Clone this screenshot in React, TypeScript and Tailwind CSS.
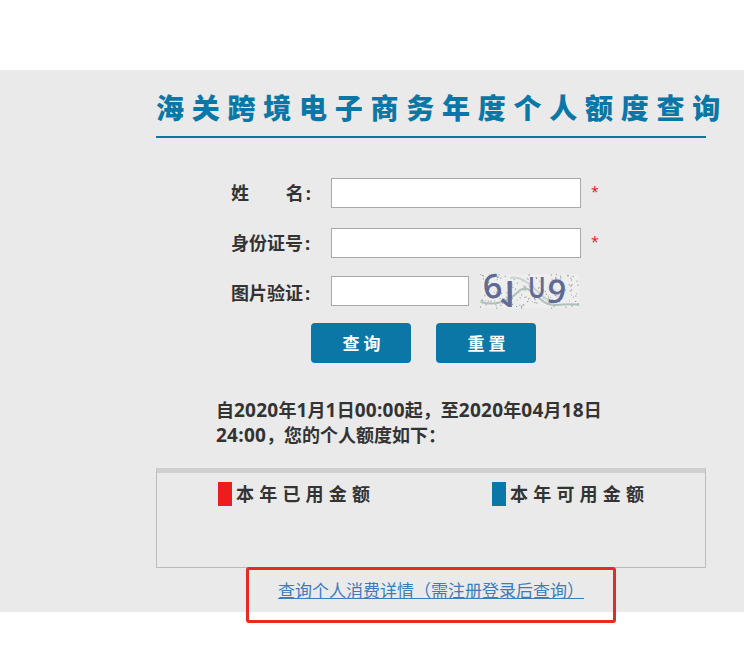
const FONT = "font-['Open_Sans','Noto_Sans_CJK_SC',sans-serif]"

// scattered noise for the captcha, same every render
const DOTS = Array.from({ length: 170 }, (_, i) => {
  const a = Math.sin(i * 12.9898) * 43758.5453
  const b = Math.sin(i * 78.233) * 12543.1234
  return {
    x: (a - Math.floor(a)) * 98,
    y: 2 + (b - Math.floor(b)) * 34,
    c: i % 4 === 0 ? "#7fa58c" : "#555555",
  }
})

function Captcha() {
  return (
    <svg width="100" height="54" viewBox="0 -8 100 54" className="ml-[11px] shrink-0 overflow-visible">
      <rect x="1" y="2" width="98" height="34" fill="#eeeeee" />
      {DOTS.map((d, i) => (
        <rect key={i} x={d.x} y={d.y} width="1" height="1" fill={d.c} opacity="0.7" />
      ))}
      <path d="M1 30 C14 34 28 30 38 20 C48 10 54 24 66 31 C76 36 88 30 99 33" fill="none" stroke="#b0c0ba" strokeWidth="2" />
      <path d="M30 6 C46 2 58 24 74 32" fill="none" stroke="#c9d4d0" strokeWidth="2" />
      <g fill="#5f6b96" fontFamily="'Open Sans',sans-serif" fontWeight="600">
        <text x="3" y="26" fontSize="33" transform="rotate(-10 14 15)">6</text>
        <text transform="translate(18 9) scale(1 -1)" fontSize="36">1</text>
        <text transform="translate(48 26) scale(0.82 1)" fontSize="29">U</text>
        <text x="67" y="31" fontSize="33" transform="rotate(8 76 20)">9</text>
      </g>
    </svg>
  )
}

function Field({ label, width, children }: { label: React.ReactNode; width: string; children?: React.ReactNode }) {
  return (
    <div className="flex h-[30px] items-center pl-[75px]">
      <label className="w-[100px] shrink-0 text-[18px] font-bold leading-[30px] text-[#333]">{label}</label>
      <input type="text" className={`h-[30px] ${width} shrink-0 border border-[#a9a9a9] bg-white`} />
      {children}
    </div>
  )
}

function Colon() {
  return <span className="ml-[2px]">:</span>
}

function Required() {
  return <span className="ml-[10px] pb-[3px] text-[14px] text-[#d81818]">*</span>
}

function Legend({ color, label, width }: { color: string; label: string; width: string }) {
  return (
    <div className={`flex ${width} items-center`}>
      <span className={`h-[24px] w-[14px] ${color}`} />
      <span className="ml-1 text-[18px] font-bold leading-[24px] tracking-[5.2px] text-[#333]">{label}</span>
    </div>
  )
}

function Num({ children }: { children: React.ReactNode }) {
  return <span className="text-[19px] tracking-[0.25px]">{children}</span>
}

export default function App() {
  return (
    <div className={`relative h-[656px] w-[744px] overflow-hidden bg-white ${FONT}`}>
      <div className="h-[70px]" />
      <main className="h-[542px] bg-[#eaeaea] pl-[156px] pt-[20px]">
        <div className="w-[550px]">
          <h1 className="whitespace-nowrap border-b-2 border-[#0b77a7] pb-[9px] text-[28px] font-black leading-[37px] tracking-[7.75px] text-[#0b77a7]">
            海关跨境电子商务年度个人额度查询
          </h1>

          <form className="mt-[40px]">
            <div className="flex flex-col gap-[20px]">
              <Field label={<span className="flex w-[80px] justify-between"><span>姓</span><span>名<Colon /></span></span>} width="w-[250px]">
                <Required />
              </Field>
              <Field label={<>身份证号<Colon /></>} width="w-[250px]">
                <Required />
              </Field>
            </div>
            <div className="mt-[18px]">
              <Field label={<span className="block translate-y-[2px]">图片验证<Colon /></span>} width="w-[138px]">
                <Captcha />
              </Field>
            </div>
            <div className="mt-[17px] flex gap-[25px] pl-[155px]">
              <button type="button" className="h-[40px] w-[100px] rounded-[4px] bg-[#0b77a7] pl-[5px] pt-[1px] text-[17px] font-bold tracking-[4px] text-white">查询</button>
              <button type="button" className="h-[40px] w-[100px] rounded-[4px] bg-[#0b77a7] pl-[5px] pt-[1px] text-[17px] font-bold tracking-[4px] text-white">重置</button>
            </div>
          </form>

          <p className="mt-[35px] w-[400px] pl-[60px] text-[18px] font-bold leading-[25px] text-[#333] [box-sizing:content-box]">
            自<Num>2020</Num>年<Num>1</Num>月<Num>1</Num>日<Num>00:00</Num>起，至<Num>2020</Num>年<Num>04</Num>月<Num>18</Num>日<Num>24:00</Num>，您的个人额度如下：
          </p>

          <section className="mt-[20px] h-[100px] border border-[#bcbcbc] border-t-[5px] border-t-[#cfcfcf] pl-[61px] pt-[9px]">
            <div className="flex">
              <Legend color="bg-[#ee1c1c]" label="本年已用金额" width="w-[274px]" />
              <Legend color="bg-[#0b77a7]" label="本年可用金额" width="w-[200px]" />
            </div>
          </section>

          <div className="mt-[10px] pl-[122px]">
            <a href="#" className="text-[17px] leading-[26px] text-[#3b7cbd] underline">查询个人消费详情（需注册登录后查询）</a>
          </div>
        </div>
      </main>
      <div className="absolute left-[246px] top-[567px] h-[56px] w-[370px] rounded-[3px] border-[3px] border-[#e92a20]" />
    </div>
  )
}
